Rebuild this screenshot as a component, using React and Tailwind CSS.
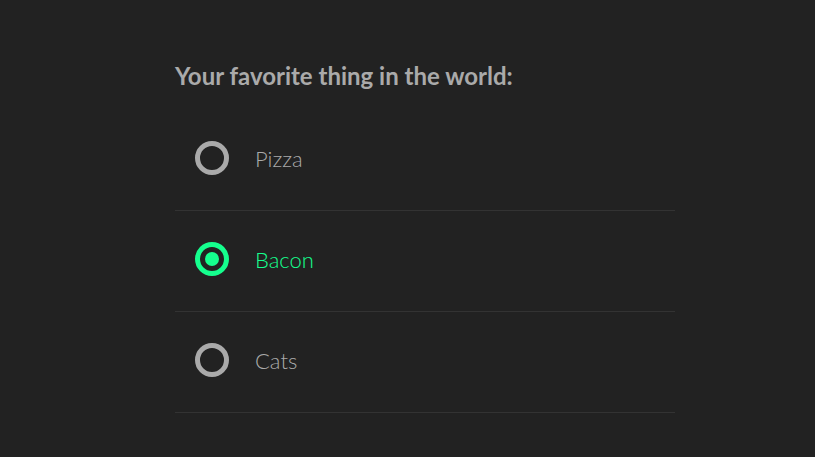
import React, { useState } from "react";

const options = ["Pizza", "Bacon", "Cats"];

const Radio = ({ checked }) => (
  <span
    className={`flex items-center justify-center size-[34px] rounded-full border-[5px] ${
      checked ? "border-[#15ff8e]" : "border-[#aaaaaa]"
    }`}
  >
    {checked && <span className="size-[14px] rounded-full bg-[#15ff8e]" />}
  </span>
);

export default function App() {
  const [selected, setSelected] = useState("Bacon");

  return (
    <div className="min-h-[457px] w-full bg-[#222222] font-['Lato',sans-serif]">
      <div className="w-[500px] ml-[175px] pt-[60px]">
        <h2 className="text-[24px] leading-[32px] font-bold text-[#aaaaaa]">
          Your favorite thing in the world:
        </h2>
        <div className="mt-[18px] flex flex-col">
          {options.map((option) => (
            <label
              key={option}
              className="flex items-center h-[101px] pl-[20px] pb-[4px] border-b border-[#333333] cursor-pointer"
              onClick={() => setSelected(option)}
            >
              <Radio checked={selected === option} />
              <span
                className={`ml-[26px] text-[22px] font-light ${
                  selected === option ? "text-[#15ff8e]" : "text-[#aaaaaa]"
                }`}
              >
                {option}
              </span>
            </label>
          ))}
        </div>
      </div>
    </div>
  );
}
